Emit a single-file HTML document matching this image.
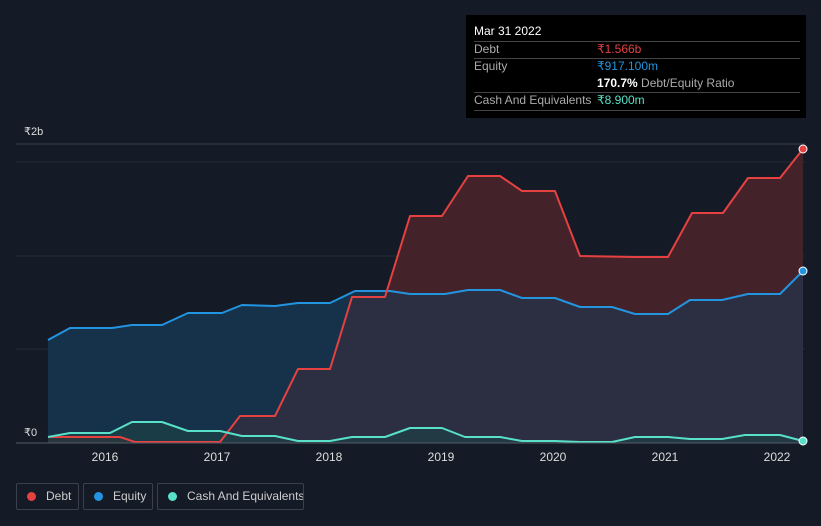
<!DOCTYPE html>
<html><head><style>
body{margin:0;width:821px;height:526px;background:#151b26;font-family:"Liberation Sans",sans-serif;overflow:hidden;position:relative}
.tt{position:absolute;left:466px;top:15px;width:340px;height:103px;background:#000;color:#fff;font-size:12px;white-space:nowrap}
.tt .r{position:absolute;left:8px;width:326px;border-top:1px solid #444}
.lbl{color:#aaa}
.lg{position:absolute;top:483px;height:27px;border:1px solid #3a404c;border-radius:2px;color:#ccc;font-size:12px;line-height:25px;box-sizing:border-box;white-space:nowrap;overflow:hidden}
.lg i{display:inline-block;width:9px;height:9px;border-radius:50%;margin:0 10px 0 10px;vertical-align:-1px}
</style></head><body>
<svg width="821" height="526" style="position:absolute;left:0;top:0">
<line x1="16" y1="144" x2="805" y2="144" stroke="#3a404c"/>
<line x1="16" y1="162" x2="805" y2="162" stroke="#252b36"/>
<line x1="16" y1="256" x2="805" y2="256" stroke="#252b36"/>
<line x1="16" y1="349" x2="805" y2="349" stroke="#252b36"/>
<polygon fill="#15324a" points="48,443 48,340 70,328 112,328 132,325 162,325 188,313 222,313 242,305 275,306 298,303 330,303 355,291 390,291 410,294 445,294 468,290 500,290 522,298 555,298 580,307 612,307 635,314 668,314 690,300 722,300 748,294 780,294 803,271 803,443"/>
<polygon fill="#44222a" points="48,443 48,437 120,437 135,442 220,442 240,416 275,416 298,369 330,369 352,297 385,297 410,216 442,216 468,176 500,176 522,191 555,191 580,256 635,257 668,257 692,213 723,213 748,178 780,178 803,149 803,443"/>
<polygon fill="#2c2e42" points="220,443 240,416 275,416 298,369 330,369 352,297 385,297 390,291 410,294 445,294 468,290 500,290 522,298 555,298 580,307 612,307 635,314 668,314 690,300 722,300 748,294 780,294 803,271 803,443"/>
<polygon fill="#1d4046" opacity="0.7" points="48,443 48,437 70,433 110,433 132,422 162,422 188,431 220,431 242,436 275,436 298,441 330,441 352,437 385,437 410,428 442,428 465,437 500,437 522,441 555,441 580,442 612,442 635,437 668,437 690,439 722,439 745,435 780,435 803,441 803,443"/>
<polyline fill="none" stroke="#2394df" stroke-width="2" stroke-linejoin="round" points="48,340 70,328 112,328 132,325 162,325 188,313 222,313 242,305 275,306 298,303 330,303 355,291 390,291 410,294 445,294 468,290 500,290 522,298 555,298 580,307 612,307 635,314 668,314 690,300 722,300 748,294 780,294 803,271"/>
<polyline fill="none" stroke="#e64141" stroke-width="2" stroke-linejoin="round" points="48,437 120,437 135,442 220,442 240,416 275,416 298,369 330,369 352,297 385,297 410,216 442,216 468,176 500,176 522,191 555,191 580,256 635,257 668,257 692,213 723,213 748,178 780,178 803,149"/>
<polyline fill="none" stroke="#58e0c8" stroke-width="2" stroke-linejoin="round" points="48,437 70,433 110,433 132,422 162,422 188,431 220,431 242,436 275,436 298,441 330,441 352,437 385,437 410,428 442,428 465,437 500,437 522,441 555,441 580,442 612,442 635,437 668,437 690,439 722,439 745,435 780,435 803,441"/>
<line x1="16" y1="443" x2="805" y2="443" stroke="#555b66"/>
<circle cx="803" cy="149" r="4" fill="#e64141" stroke="#fff" stroke-width="1"/>
<circle cx="803" cy="271" r="4" fill="#2394df" stroke="#fff" stroke-width="1"/>
<circle cx="803" cy="441" r="4" fill="#58e0c8" stroke="#fff" stroke-width="1"/>
<g fill="#ddd" font-size="12" text-anchor="middle" font-family="Liberation Sans">
<text x="105" y="461">2016</text><text x="217" y="461">2017</text><text x="329" y="461">2018</text><text x="441" y="461">2019</text><text x="553" y="461">2020</text><text x="665" y="461">2021</text><text x="777" y="461">2022</text>
</g>
<text x="24" y="135" fill="#ddd" font-size="11">₹2b</text>
<text x="24" y="436" fill="#ddd" font-size="11">₹0</text>
</svg>
<div class="tt">
<div style="position:absolute;left:8px;top:9px;font-size:12px">Mar 31 2022</div>
<div class="r" style="top:26px"></div>
<div style="position:absolute;left:8px;top:27px" class="lbl">Debt</div>
<div style="position:absolute;left:131px;top:27px;color:#e64141">₹1.566b</div>
<div class="r" style="top:43px"></div>
<div style="position:absolute;left:8px;top:44px" class="lbl">Equity</div>
<div style="position:absolute;left:131px;top:44px;color:#2394df">₹917.100m</div>
<div style="position:absolute;left:131px;top:61px"><b>170.7%</b> <span class="lbl">Debt/Equity Ratio</span></div>
<div class="r" style="top:77px"></div>
<div style="position:absolute;left:8px;top:78px" class="lbl">Cash And Equivalents</div>
<div style="position:absolute;left:131px;top:78px;color:#58e0c8">₹8.900m</div>
<div class="r" style="top:95px"></div>
</div>
<div class="lg" style="left:16px;width:63px"><i style="background:#e64141"></i>Debt</div>
<div class="lg" style="left:83px;width:70px"><i style="background:#2394df"></i>Equity</div>
<div class="lg" style="left:157px;width:147px"><i style="background:#58e0c8"></i>Cash And Equivalents</div>
</body></html>
